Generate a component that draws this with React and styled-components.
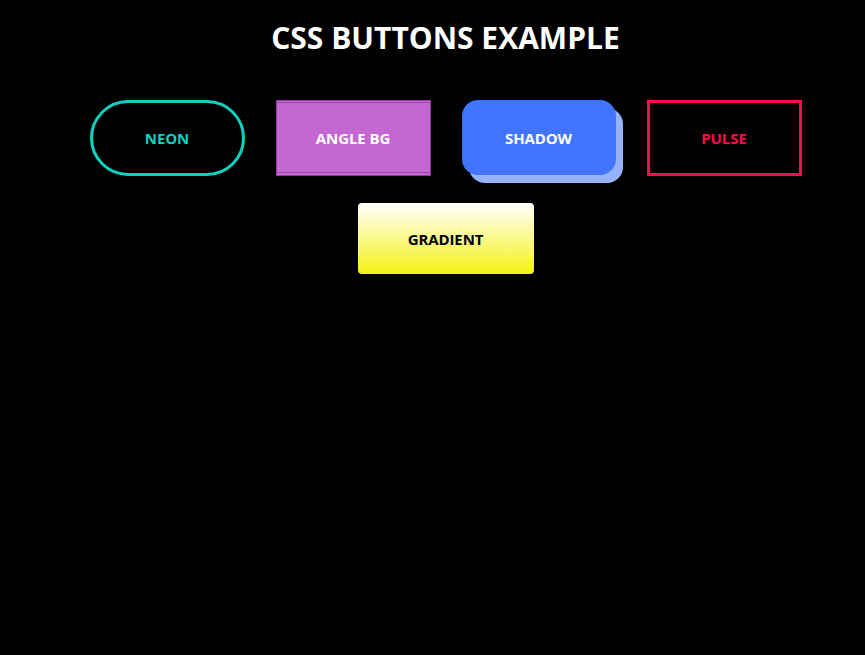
import styled, { createGlobalStyle } from 'styled-components';

const GlobalStyle = createGlobalStyle`
    html, body {
        margin: 0;
        padding: 0;
        background: #000;
    }
    body {
        font-family: 'Open Sans', 'Noto Sans', sans-serif;
    }
`;

const Page = styled.div`
    min-height: 100vh;
    background: #000;
    padding: 18px 0 0 26px;
    box-sizing: border-box;
`;

const Title = styled.h1`
    margin: 0 0 42px;
    text-align: center;
    color: #fff;
    font-size: 30px;
    font-weight: 700;
    letter-spacing: 0;
    line-height: 40px;
`;

const ButtonGrid = styled.div`
    display: flex;
    flex-wrap: wrap;
    justify-content: center;
    column-gap: 31px;
    row-gap: 27px;
    width: 760px;
    margin: 0 auto;
`;

const BaseButton = styled.button`
    width: 155px;
    height: 76px;
    box-sizing: border-box;
    font-family: 'Open Sans', 'Noto Sans', sans-serif;
    font-size: 15px;
    font-weight: 700;
    letter-spacing: -0.1px;
    line-height: 18px;
    padding: 0;
    cursor: pointer;
`;

const NeonButton = styled(BaseButton)`
    background: transparent;
    color: #0fd1c0;
    border: 3px solid #0fd1c0;
    border-radius: 38px;
`;

const AngleButton = styled(BaseButton)`
    background: #c467d2;
    color: #fff;
    border: 1px solid #8c3f99;
    box-shadow: inset 0 1px 0 #c467d2, inset 0 2px 0 #9c4aa8,
        inset 0 -2px 0 #c467d2, inset 0 -3px 0 #9c4aa8;
`;

const ShadowButton = styled(BaseButton)`
    width: 154px;
    height: 75px;
    background: #4175ff;
    color: #fff;
    border: none;
    border-radius: 16px;
    box-shadow: 7px 8px 0 #94b4ff;
`;

const PulseButton = styled(BaseButton)`
    background: transparent;
    color: #ff0a50;
    border: 3px solid #ff0a50;
`;

const GradientButton = styled(BaseButton)`
    width: 176px;
    height: 71px;
    background: linear-gradient(to bottom, #ffffff 0%, #f5f214 100%);
    color: #000;
    border: none;
    border-radius: 4px;
`;

export default function App() {
    return (
        <>
            <GlobalStyle />
            <Page>
                <Title>CSS BUTTONS EXAMPLE</Title>
                <ButtonGrid>
                    <NeonButton>NEON</NeonButton>
                    <AngleButton>ANGLE BG</AngleButton>
                    <ShadowButton>SHADOW</ShadowButton>
                    <PulseButton>PULSE</PulseButton>
                    <GradientButton>GRADIENT</GradientButton>
                </ButtonGrid>
            </Page>
        </>
    );
}
